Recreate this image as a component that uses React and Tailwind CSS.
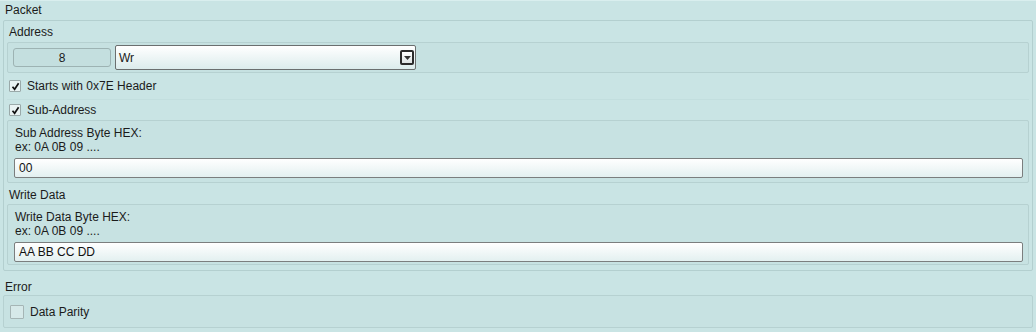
import React from 'react';

const Check = ({ checked }) => (
    <div className="w-[12px] h-[12px] border border-[#9aa9a9] bg-[#e9f3f3] rounded-[1px] flex items-center justify-center shrink-0">
        {checked && (
            <svg width="9" height="9" viewBox="0 0 9 9">
                <path d="M1.5 4.8 L3.6 7.3 L7.6 1.2" fill="none" stroke="#111" strokeWidth="1.7" />
            </svg>
        )}
    </div>
);

const TextBox = ({ value, className = '' }) => (
    <div className={`h-[20px] border border-[#7b7e7e] rounded-[2px] bg-gradient-to-b from-white to-[#e3f0f0] flex items-center pl-[4px] text-[#111] ${className}`}>
        {value}
    </div>
);

const HexBox = ({ title, value, height }) => (
    <div className={`${height} border border-[#b6d1d1] rounded-[2px] bg-[#c7e2e2] pl-[6px] pr-[5px] pt-[5px]`}>
        <div className="pl-px">{title}</div>
        <div className="pl-px">ex: 0A 0B 09 ....</div>
        <TextBox value={value} className="mt-[4px]" />
    </div>
);

export default function App() {
    return (
        <div className="w-[1036px] h-[332px] bg-[#c9e4e4] border-t border-[#d9eeee] px-[3px] font-['Liberation_Sans',Arial,sans-serif] text-[12px] leading-[14px] text-[#1b1b1b] overflow-hidden">
            <div className="h-[19px] pl-[2px] pt-[2px]">Packet</div>
            <div className="h-[251px] border border-[#b3cfcf] rounded-[2px] px-[3px]">
                <div className="h-[21px] pt-[4px] pl-[2px]">Address</div>
                <div className="h-[31px] border border-[#b6d1d1] rounded-[2px] bg-[#c6e1e1] flex items-center pl-[5px]">
                    <div className="w-[98px] h-[19px] border border-[#9db3b3] rounded-[3px] bg-[#c4dfdf] flex items-center justify-center">8</div>
                    <div className="ml-[4px] w-[301px] h-[25px] border border-[#6b6f6f] rounded-[2px] bg-gradient-to-b from-white to-[#dcecec] flex items-center justify-between pl-[3px] pr-px">
                        <span>Wr</span>
                        <div className="w-[14px] h-[15px] border-2 border-[#2b2b2b] rounded-[2px] bg-gradient-to-b from-white to-[#dde3e3] flex items-center justify-center">
                            <svg width="7" height="4" viewBox="0 0 7 4">
                                <path d="M0 0 H7 L3.5 4 Z" fill="#333" />
                            </svg>
                        </div>
                    </div>
                </div>
                <div className="h-[27px] flex items-center gap-[6px] pl-[2px] border-b border-[#c2dede]">
                    <Check checked />
                    <span>Starts with 0x7E Header</span>
                </div>
                <div className="h-[20px] flex items-center gap-[6px] pl-[2px]">
                    <Check checked />
                    <span>Sub-Address</span>
                </div>
                <HexBox title="Sub Address Byte HEX:" value="00" height="h-[63px]" />
                <div className="h-[21px] pt-[5px] pl-[2px]">Write Data</div>
                <HexBox title="Write Data Byte HEX:" value="AA BB CC DD" height="h-[61px]" />
            </div>
            <div className="h-[24px] pt-[9px] pl-[2px]">Error</div>
            <div className="h-[33px] border border-[#b6d1d1] rounded-[2px] bg-[#c7e2e2] flex items-center gap-[6px] pl-[6px]">
                <div className="w-[14px] h-[14px] border border-[#a5b5b5] bg-[#d6e9e9] rounded-[1px]" />
                <span>Data Parity</span>
            </div>
        </div>
    );
}
